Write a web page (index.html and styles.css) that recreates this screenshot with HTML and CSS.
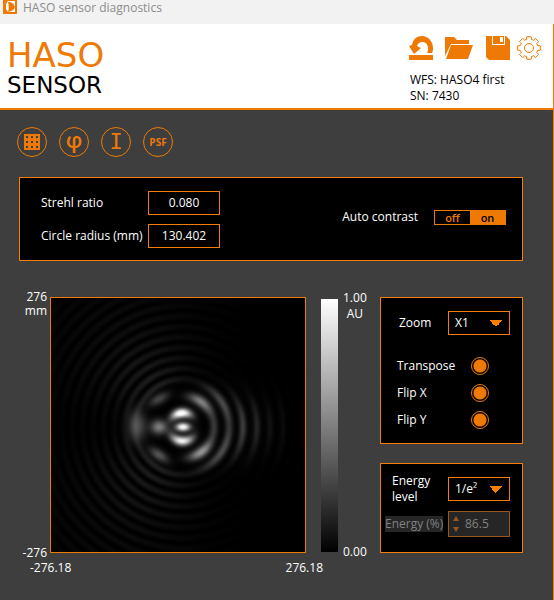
FILE: index.html
```html
<!DOCTYPE html>
<html lang="en">
<head>
  <meta charset="UTF-8">
  <meta name="viewport" content="width=device-width, initial-scale=1.0">
  <title>HASO sensor diagnostics</title>
  <link rel="stylesheet" href="styles.css">
</head>
<body>
  <div class="titlebar">
    <svg class="app-icon" width="14" height="14" viewBox="0 0 14 14">
      <rect width="14" height="14" fill="#ee7a05"/>
      <rect x="2" y="1" width="10" height="11" fill="#fff"/>
      <path d="M2 1h3L3 4v5l2 3H2zM5 2c4 0 6 2 7 5-1 3-3 4-7 5 1-3 1-7 0-10z" fill="#ee7a05"/>
    </svg>
    <span>HASO sensor diagnostics</span>
  </div>

  <div class="window">
    <header class="header">
      <h1 class="logo">
        <span class="logo-main">HASO</span>
        <span class="logo-sub">SENSOR</span>
      </h1>
      <div class="header-right">
        <div class="tools">
          <button class="tool" aria-label="Back">
            <svg width="29" height="26" viewBox="0 0 29 26" fill="#ee7a05">
              <path d="M0 20h24v5H0z"/>
              <path d="M0 11l3-1C4 4 8 1 13 1c6 0 11 5 11 12 0 2 0 3-1 5h-5c1-2 1-3 1-5 0-4-3-6-6-6-2 0-4 1-5 4l4 2-7 6z"/>
            </svg>
          </button>
          <button class="tool" aria-label="Open">
            <svg width="34" height="26" viewBox="0 0 34 26" fill="#ee7a05">
              <path d="M0 21V2h9l3 3h12v4H6z"/>
              <path d="M6 10h22l-5 14H1z"/>
            </svg>
          </button>
          <button class="tool" aria-label="Save">
            <svg width="24" height="26" viewBox="0 0 24 26">
              <path d="M0 1h20l4 4v20H3l-3-3z" fill="#ee7a05"/>
              <path d="M6 1h13v9H6z" fill="#fff"/>
              <path d="M7 1h11v8H7z" fill="#ee7a05"/>
              <path d="M14 2h3v5h-3z" fill="#fff"/>
            </svg>
          </button>
          <button class="tool" aria-label="Settings">
            <svg width="25" height="26" viewBox="-12 -13 25 26" fill="none" stroke="#ee7a05" stroke-linejoin="round">
              <path id="gear"/>
              <circle r="4.500"/>
            </svg>
          </button>
        </div>
        <p class="device">WFS: HASO4 first<br>SN: 7430</p>
      </div>
    </header>

    <main class="content">
      <nav class="views">
        <button class="view" aria-label="Grid">
          <svg width="16" height="16" viewBox="0 0 16 16" fill="#ee7a05">
            <path fill-rule="evenodd" d="M0 0h16v16H0zM2 2v2h2V2zM7 2v2h2V2zM12 2v2h2V2zM2 7v2h2V7zM7 7v2h2V7zM12 7v2h2V7zM2 12v2h2v-2zM7 12v2h2v-2zM12 12v2h2v-2z"/>
          </svg>
        </button>
        <button class="view view-phase">φ</button>
        <button class="view view-intensity">I</button>
        <button class="view view-psf">PSF</button>
      </nav>

      <section class="panel summary">
        <div class="readings">
          <label for="strehl">Strehl ratio</label>
          <input class="value" id="strehl" type="text" value="0.080" readonly>
          <label for="radius">Circle radius (mm)</label>
          <input class="value" id="radius" type="text" value="130.402" readonly>
        </div>
        <div class="contrast">
          <span id="contrast-label">Auto contrast</span>
          <button class="switch" role="switch" aria-checked="true" aria-labelledby="contrast-label">
            <span class="switch-off">off</span>
            <span class="switch-on">on</span>
          </button>
        </div>
      </section>

      <section class="results">
        <div class="axis-y">
          <span>276<br>mm</span>
          <span>-276</span>
        </div>
        <div class="plot"><canvas id="psf" width="127" height="127"></canvas></div>
        <div class="scale"></div>
        <div class="axis-scale">
          <span>1.00<br>AU</span>
          <span>0.00</span>
        </div>

        <div class="side">
          <div class="panel display">
            <div class="field zoom-field">
              <label for="zoom">Zoom</label>
              <select class="select" id="zoom"><option>X1</option></select>
            </div>
            <div class="field">
              <label for="transpose">Transpose</label>
              <input class="led" id="transpose" type="checkbox" checked>
            </div>
            <div class="field">
              <label for="flipx">Flip X</label>
              <input class="led" id="flipx" type="checkbox" checked>
            </div>
            <div class="field">
              <label for="flipy">Flip Y</label>
              <input class="led" id="flipy" type="checkbox" checked>
            </div>
          </div>

          <div class="panel energy">
            <div class="field">
              <label class="level-label" for="level">Energy level</label>
              <select class="select" id="level"><option>1/e²</option></select>
            </div>
            <div class="field disabled">
              <label class="percent-label" for="percent">Energy (%)</label>
              <div class="spinner">
                <svg width="6" height="16" viewBox="0 0 6 16" fill="#96581f">
                  <path d="M0 5l3-5l3 5zM0 11h6l-3 5z"/>
                </svg>
                <input id="percent" type="text" value="86.5" disabled>
              </div>
            </div>
          </div>
        </div>
      </section>
      <div class="axis-x">
        <span>-276.18</span>
        <span>276.18</span>
      </div>
    </main>
  </div>
  <script src="script.js"></script>
</body>
</html>
```
FILE: styles.css
```css
* {
  box-sizing: border-box;
}

body {
  margin: 0;
  min-height: 100vh;
  display: flex;
  flex-direction: column;
  background-color: #3e3e3e;
  color: #ffffff;
  font-family: "Open Sans", sans-serif;
  font-size: 12px;
  line-height: 16px;
}

button,
input,
select {
  font: inherit;
  color: inherit;
  margin: 0;
  padding: 0;
  border: 0;
  border-radius: 0;
  background: none;
}

.titlebar {
  display: flex;
  gap: 6px;
  height: 24px;
  padding-left: 3px;
  background-color: #f2f2f2;
  color: #8c8c8c;
}

.window {
  flex: 1;
  border-right: 1px solid #ee7a05;
}

.header {
  display: flex;
  justify-content: space-between;
  height: 86px;
  padding: 11px 11px 0 7px;
  background-color: #ffffff;
  border-bottom: 2px solid #ee7a05;
  color: #000000;
}

.logo {
  display: flex;
  flex-direction: column;
  margin: 0;
  font-family: "DejaVu Sans", sans-serif;
  font-weight: normal;
}

.logo-main {
  color: #ee7a05;
  font-size: 34px;
  line-height: 40px;
}

.logo-sub {
  font-size: 23px;
  line-height: 20px;
}

.tools {
  display: flex;
  gap: 7px;
}

.tool {
  display: flex;
}

.device {
  margin: 11px 0 0 1px;
  line-height: 16px;
}

.content {
  padding: 17px 30px 0 19px;
}

.views {
  display: flex;
  gap: 12px;
  margin-left: -2px;
}

.view {
  display: flex;
  align-items: center;
  justify-content: center;
  width: 30px;
  height: 30px;
  border: 1px solid #ee7a05;
  border-radius: 50%;
  color: #ee7a05;
}

.view-phase {
  padding-bottom: 7px;
  font-size: 22px;
  font-weight: 600;
}

.view-intensity {
  font-family: "DejaVu Sans Mono", monospace;
  font-size: 22px;
}

.view-psf {
  font-size: 10px;
  font-weight: bold;
}

.panel {
  background-color: #000000;
  border: 1px solid #f57d0a;
}

.summary {
  display: flex;
  align-items: center;
  justify-content: space-between;
  height: 84px;
  margin-top: 20px;
  padding: 0 16px 0 21px;
}

.readings {
  display: grid;
  grid-template-columns: 107px 72px;
  row-gap: 9px;
  align-items: center;
}

.value {
  width: 72px;
  height: 24px;
  border: 1px solid #f57d0a;
  text-align: center;
}

.contrast {
  display: flex;
  align-items: center;
  gap: 16px;
  margin-bottom: 4px;
}

.switch {
  display: flex;
  width: 72px;
  height: 15px;
  border: 1px solid #ee7a05;
  font-size: 11px;
  font-weight: 600;
  line-height: 13px;
}

.switch span {
  flex: 1;
}

.switch-off {
  color: #ee7a05;
}

.switch-on {
  background-color: #ee7a05;
  color: #000000;
}

.results {
  display: flex;
  align-items: stretch;
  margin-top: 36px;
}

.axis-y,
.axis-scale {
  display: flex;
  flex-direction: column;
  justify-content: space-between;
  margin: -7px 0;
}

.axis-y {
  width: 31px;
  padding-right: 3px;
  line-height: 14px;
  text-align: right;
}

.axis-scale {
  align-items: flex-start;
  width: 42px;
  padding-left: 5px;
  text-align: center;
}

.plot {
  flex: 1;
  aspect-ratio: 1;
  border: 1px solid #ee7a05;
  background-color: #000000;
}

.plot canvas {
  display: block;
  width: 100%;
  height: 100%;
}

.scale {
  width: 17px;
  margin: 2px 0 1px 15px;
  background: linear-gradient(#ffffff, #000000);
}

.side {
  display: flex;
  flex-direction: column;
  justify-content: space-between;
  width: 143px;
}

.field {
  display: flex;
  align-items: center;
  justify-content: space-between;
}

.display {
  height: 147px;
  padding: 13px 33px 0 16px;
}

.display .field {
  height: 27px;
}

.display .zoom-field {
  height: 24px;
  margin: 0 -21px 17px 2px;
}

.select {
  appearance: none;
  width: 62px;
  height: 24px;
  padding-left: 6px;
  border: 1px solid #f57d0a;
  background: linear-gradient(to bottom right, #ff7f00 50%, transparent 50%) no-repeat 47px 8px / 7px 7px,
    linear-gradient(to bottom left, #ff7f00 50%, transparent 50%) no-repeat 40px 8px / 7px 7px;
}

.led {
  appearance: none;
  width: 18px;
  height: 18px;
  border: 1px solid #ee7a05;
  border-radius: 50%;
}

.led:checked {
  background: radial-gradient(circle, #ee7a05 6px, #000000 7px);
}

.energy {
  height: 90px;
  padding: 9px 12px 0 4px;
}

.level-label {
  width: 50px;
  margin-left: 7px;
}

.disabled {
  margin-top: 6px;
  color: #828282;
}

.percent-label {
  background-color: #262626;
}

.spinner {
  display: flex;
  align-items: center;
  gap: 6px;
  width: 62px;
  height: 26px;
  padding-left: 4px;
  border: 1px solid #96581f;
  background-color: #262626;
}

.spinner input {
  width: 40px;
}

.axis-x {
  display: flex;
  justify-content: space-between;
  margin: 7px 200px 0 11px;
}
```
FILE: script.js
```js
// settings gear outline
const teeth = 8;
let d = '';
for (let i = 0; i < teeth; i++) {
  [[-0.26, 9], [-0.2, 11.5], [0.2, 11.5], [0.26, 9]].forEach(([off, r]) => {
    const a = i * 2 * Math.PI / teeth + off;
    d += (d ? 'L' : 'M') + (r * Math.cos(a)).toFixed(2) + ' ' + (r * Math.sin(a)).toFixed(2);
  });
}
document.getElementById('gear').setAttribute('d', d + 'z');

// point spread function, coordinates relative to the central peak
const canvas = document.getElementById('psf');
const ctx = canvas.getContext('2d');
const image = ctx.createImageData(canvas.width, canvas.height);

// x, y, width, height, tilt, level
const spots = [
  [0, 0, 7, 4, 0, 1.1],
  [-24, 0, 8, 7, 0, 0.5],
  [-46, -1, 9, 15, 0, 0.32],
  [-24, -28, 11, 5, -0.5, 0.28],
  [-24, 28, 11, 5, 0.6, 0.34]
];

// radius, width, centre angle, angular spread, level
const arcs = [
  [14, 4.5, -1.7, 0.75, 1.15],
  [14, 4.5, 1.65, 0.85, 1],
  [31, 5, -0.95, 0.45, 0.5],
  [31, 5, 0.95, 0.45, 0.58],
  [31, 4, 0, 0.6, 0.22],
  [46, 4, -0.55, 0.5, 0.28],
  [46, 4, 0.55, 0.6, 0.3],
  [60, 3.5, 0, 0.52, 0.24],
  [74, 3.2, 0, 0.4, 0.15],
  [87, 3, 0, 0.3, 0.07],
  [100, 3, 0, 0.3, 0.04]
];

function gauss(v, w) {
  return Math.exp(-v * v / (w * w));
}

function intensity(x, y) {
  const r = Math.hypot(x, y);
  const angle = Math.atan2(y, x);
  let v = 0;
  spots.forEach(([sx, sy, w, h, t, level]) => {
    const dx = x - sx, dy = y - sy;
    v += level * gauss(dx * Math.cos(t) + dy * Math.sin(t), w) * gauss(dy * Math.cos(t) - dx * Math.sin(t), h);
  });
  arcs.forEach(([radius, w, a, spread, level]) => {
    v += level * gauss(r - radius, w) * gauss(angle - a, spread);
  });
  // faint outer rings, strongest on the two left diagonals
  if (r > 43) {
    const side = gauss(Math.abs(angle) - 2.2, 0.7) + 0.08;
    v += 0.13 * side * Math.exp(-(r - 43) / 75) * Math.pow(Math.cos(Math.PI * (r - 48) / 10.5), 2);
  }
  return Math.min(v, 1);
}

for (let j = 0; j < canvas.height; j++) {
  for (let i = 0; i < canvas.width; i++) {
    const p = (j * canvas.width + i) * 4;
    image.data[p] = image.data[p + 1] = image.data[p + 2] = 255 * intensity(i * 2 - 131, j * 2 - 128);
    image.data[p + 3] = 255;
  }
}
ctx.putImageData(image, 0, 0);
```
